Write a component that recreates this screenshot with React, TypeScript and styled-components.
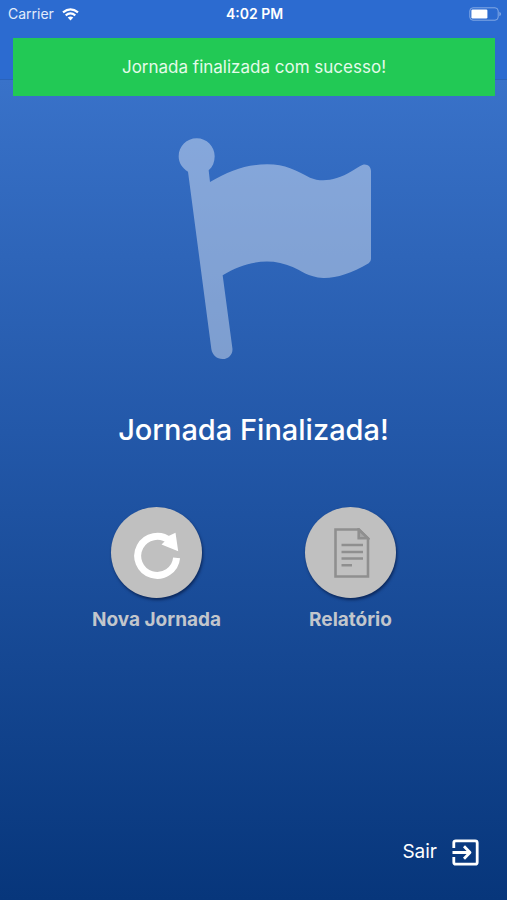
import React from "react";
import styled, { createGlobalStyle } from "styled-components";

const GlobalStyle = createGlobalStyle`
  * { box-sizing: border-box; }
  body { margin: 0; font-family: Inter, "Liberation Sans", sans-serif; color: #fff; }
  button { font: inherit; color: inherit; background: none; border: 0; padding: 0; cursor: pointer; }
`;

const Screen = styled.div`
  position: relative;
  display: flex;
  flex-direction: column;
  min-height: 100vh;
  background: linear-gradient(180deg, #3972c9 80px, #2358a9 48%, #07367b 100%);
`;

const Header = styled.header`
  height: 80px;
  background: #2c6bd0;
  border-bottom: 1px solid #2a63bb;
`;

const StatusBar = styled.div`
  display: grid;
  grid-template-columns: 1fr auto 1fr;
  align-items: center;
  height: 28px;
  padding: 0 6px 0 8px;
  font-size: 14px;
  line-height: 20px;
`;

const Carrier = styled.span`
  display: flex;
  align-items: center;
  gap: 8px;
  color: #e2ecfb;
`;

const Clock = styled.time`
  font-weight: 600;
`;

const BatterySlot = styled.span`
  display: flex;
  justify-content: flex-end;
`;

const Toast = styled.div`
  position: absolute;
  top: 38px;
  left: 13px;
  right: 12px;
  display: flex;
  align-items: center;
  justify-content: center;
  height: 58px;
  background: #22c955;
  color: #e4fbea;
  font-size: 17px;
  line-height: 24px;
`;

const Content = styled.main`
  flex: 1;
  display: flex;
  flex-direction: column;
  align-items: center;
  padding: 58px 16px 24px;
`;

const Title = styled.h1`
  margin: 51px 0 0;
  font-size: 29px;
  line-height: 40px;
  font-weight: 500;
`;

const Actions = styled.div`
  display: grid;
  grid-template-columns: repeat(2, 1fr);
  justify-items: center;
  width: 100%;
  max-width: 388px;
  margin-top: 57px;
`;

const Action = styled.button`
  display: flex;
  flex-direction: column;
  align-items: center;
  gap: 9px;
`;

const Disc = styled.span`
  display: flex;
  align-items: center;
  justify-content: center;
  width: 91px;
  height: 91px;
  border-radius: 50%;
  background: #c0c0c0;
  box-shadow: 1px 2px 3px rgba(0, 15, 50, 0.6);
`;

const ActionLabel = styled.span`
  color: #c2c6cc;
  font-size: 19px;
  line-height: 26px;
  font-weight: 700;
`;

const Footer = styled.footer`
  display: flex;
  justify-content: flex-end;
  padding: 0 28px 32px;
`;

const ExitButton = styled.button`
  display: flex;
  align-items: center;
  gap: 15px;
  font-size: 19px;
  line-height: 32px;
`;

const WifiIcon = () => (
  <svg width="17" height="13" viewBox="0 0 17 13" fill="none" stroke="#fff" strokeWidth="2.2" aria-hidden="true">
    <path d="M1 4.4 Q8.5 -1.8 16 4.4" />
    <path d="M3.7 7.3 Q8.5 3.4 13.3 7.3" />
    <path d="M8.5 12.5 5.7 9.6 Q8.5 7.4 11.3 9.6Z" fill="#fff" stroke="none" />
  </svg>
);

const BatteryIcon = () => (
  <svg width="32" height="14" viewBox="0 0 32 14" aria-hidden="true">
    <rect x="0.8" y="0.8" width="28.4" height="12.4" rx="3.2" fill="none" stroke="#83a9e4" strokeWidth="1" />
    <rect x="2.4" y="2.5" width="16" height="9" rx="1.2" fill="#fff" />
    <path d="M30.4 4.8 Q32 5.5 32 7 T30.4 9.2Z" fill="#83a9e4" />
  </svg>
);

const FlagIcon = () => (
  <svg width="237" height="221" viewBox="-75 55 711 663" fill="#fff" fillOpacity="0.4" aria-hidden="true">
    <path d="M84 156 C66 145 56 129 56 110 C56 80 80 56 110 56 C140 56 164 80 164 110 C164 127 158 142 146 152 L150 187 C208 152 260 134 322 134 C376 134 408 152 450 174 C484 188 526 184 576 154 C590 146 600 138 609 135 C622 132 633 141 633 154 L633 418 Q633 426 626 431 C574 462 528 476 490 475 C442 472 424 453 398 442 C350 421 298 419 238 442 C220 449 204 457 188 467 L217 684 C220 702 207 718 188 718 C170 718 157 706 154 688 Z" />
  </svg>
);

const RestartIcon = () => (
  <svg width="48" height="52" viewBox="0 -1 48 52" aria-hidden="true">
    <path d="M36.7 12.9 A19.5 19.5 0 1 0 43.6 29.8" fill="none" stroke="#fff" strokeWidth="7" />
    <path d="M42.5 4.8 45.2 23.2 28.5 16.5 32 13 35.5 8Z" fill="#fff" />
  </svg>
);

const ReportIcon = () => (
  <svg width="38" height="50" viewBox="-2 0 38 50" fill="none" stroke="#8f8f8f" strokeWidth="2.6" aria-hidden="true">
    <path d="M1.5 1.5 H25 L34 10.5 V48.5 H1.5Z" />
    <path d="M24.7 1.5 V10.3 H34Z" fill="#a5a5a5" />
    <path d="M7.5 17 H29 M7.5 24 H29 M7.5 30.5 H29 M7.5 37.3 H18" />
  </svg>
);

const ExitIcon = () => (
  <svg width="27" height="27" viewBox="0 0 27 27" fill="none" stroke="#fff" strokeWidth="2.8" strokeLinejoin="round" aria-hidden="true">
    <path d="M1.8 9 V3.8 Q1.8 1.8 3.8 1.8 H23.2 Q25.2 1.8 25.2 3.8 V23.2 Q25.2 25.2 23.2 25.2 H3.8 Q1.8 25.2 1.8 23.2 V18" />
    <path d="M0.5 13.5 H17.5 M12 7.2 18 13.5 12 19.8" />
  </svg>
);

export default function App() {
  return (
    <Screen>
      <GlobalStyle />
      <Header>
        <StatusBar>
          <Carrier>Carrier <WifiIcon /></Carrier>
          <Clock dateTime="16:02">4:02 PM</Clock>
          <BatterySlot><BatteryIcon /></BatterySlot>
        </StatusBar>
      </Header>
      <Toast role="status">Jornada finalizada com sucesso!</Toast>
      <Content>
        <FlagIcon />
        <Title>Jornada Finalizada!</Title>
        <Actions>
          <Action type="button">
            <Disc><RestartIcon /></Disc>
            <ActionLabel>Nova Jornada</ActionLabel>
          </Action>
          <Action type="button">
            <Disc><ReportIcon /></Disc>
            <ActionLabel>Relatório</ActionLabel>
          </Action>
        </Actions>
      </Content>
      <Footer>
        <ExitButton type="button">Sair <ExitIcon /></ExitButton>
      </Footer>
    </Screen>
  );
}
